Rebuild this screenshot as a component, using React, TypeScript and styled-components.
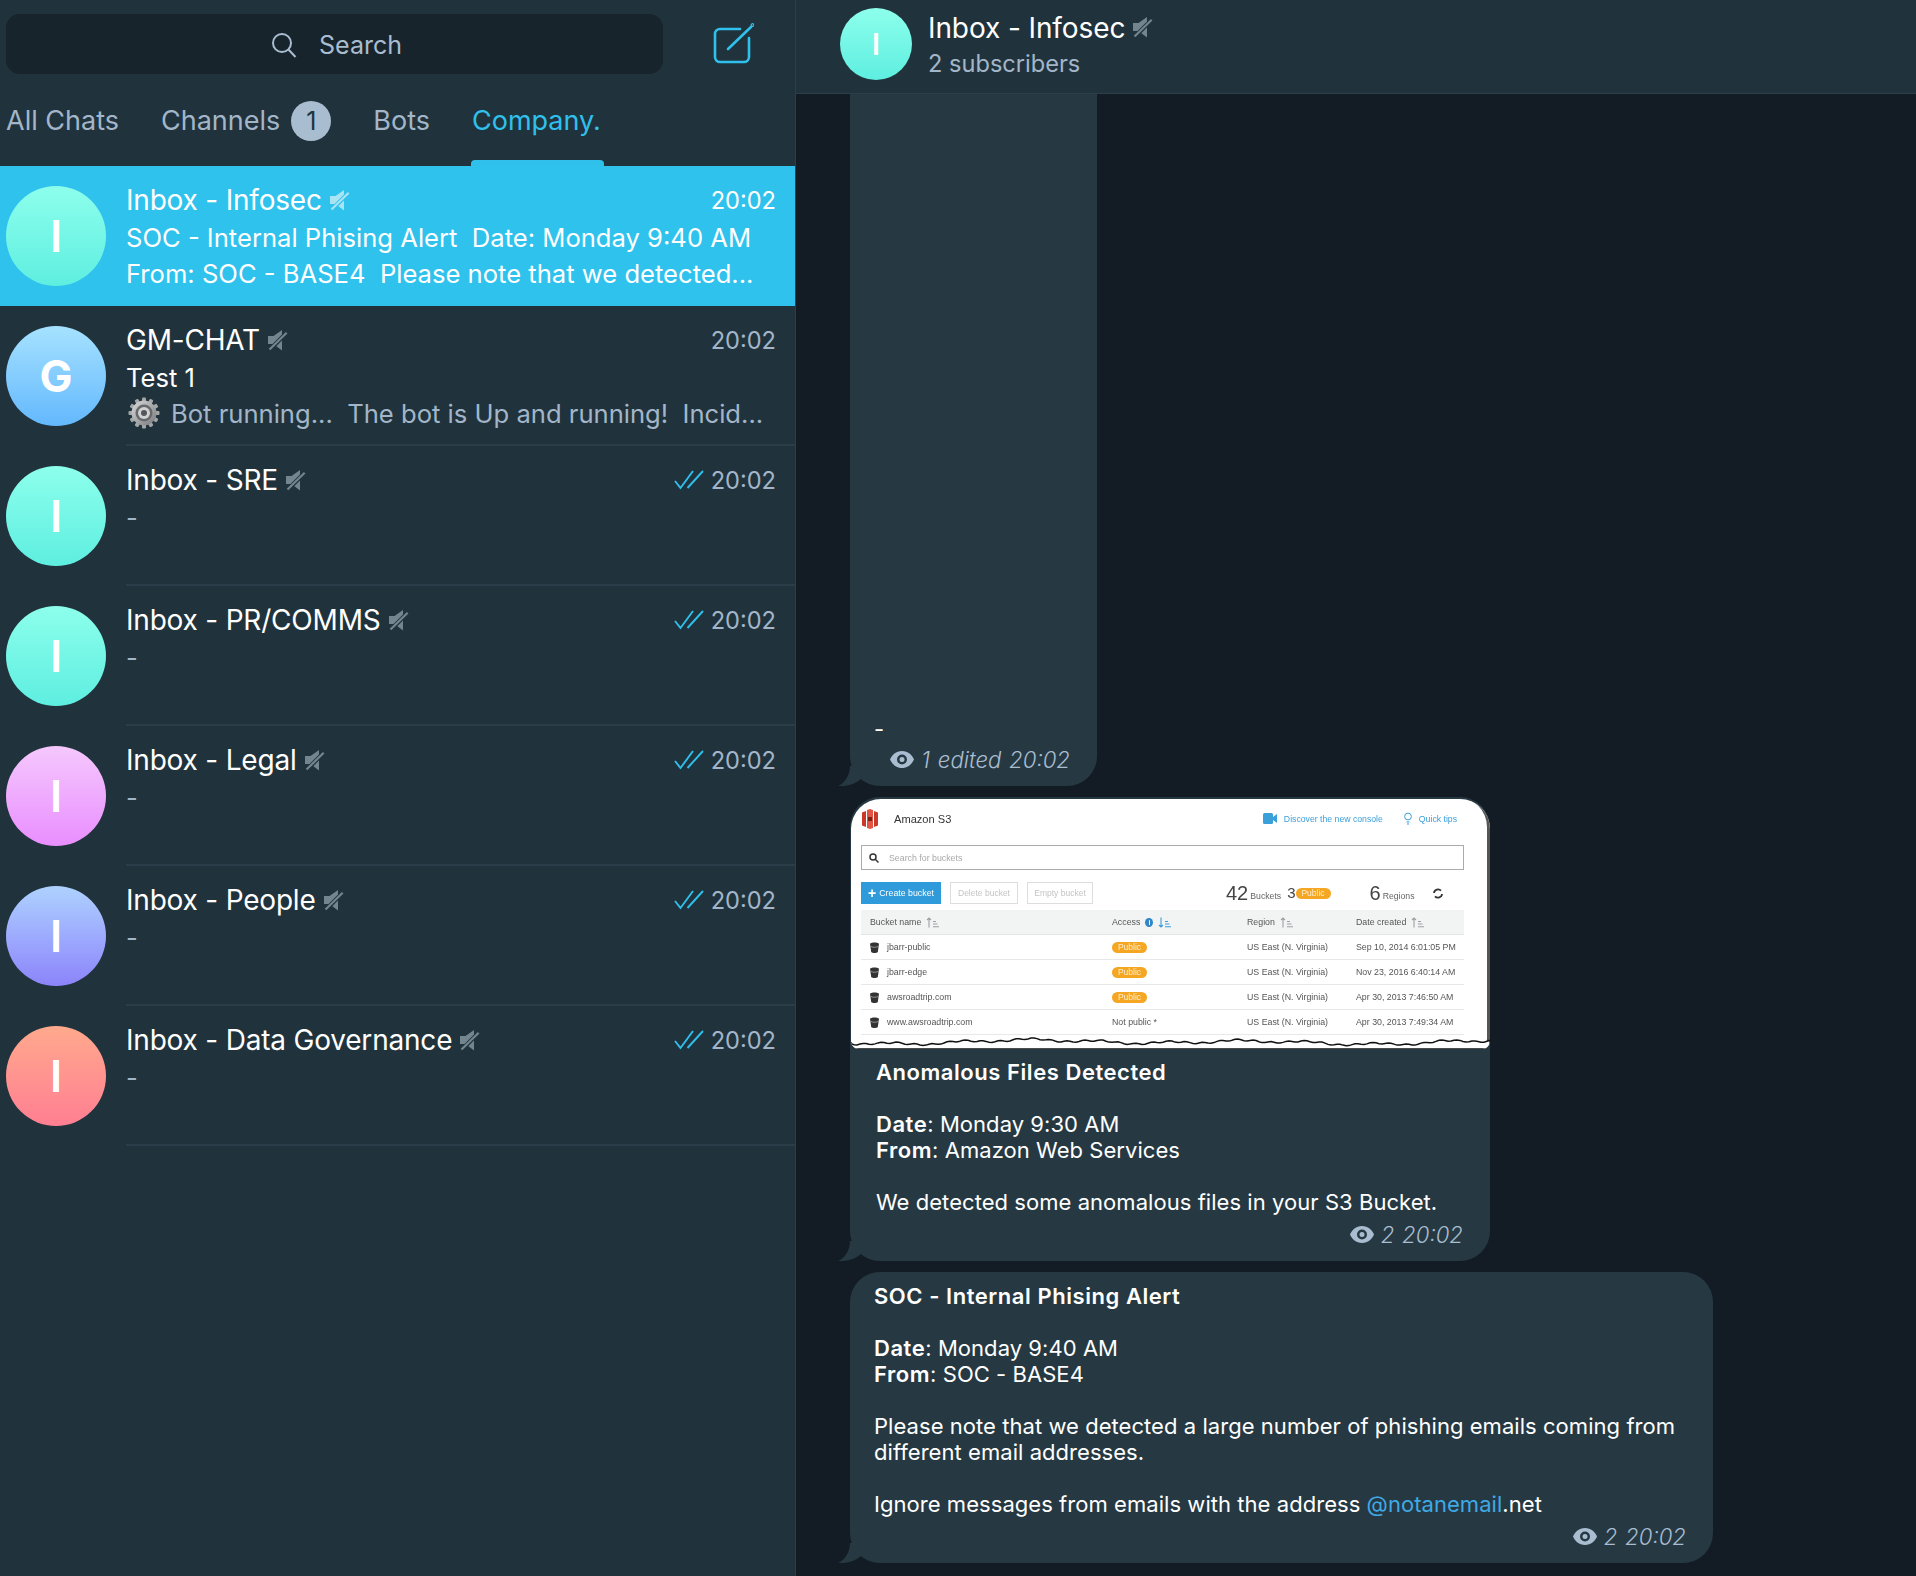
import styled, { createGlobalStyle } from 'styled-components'

const GlobalStyle = createGlobalStyle`
  html, body {
    margin: 0;
    padding: 0;
    background: #131c24;
  }
  * {
    box-sizing: border-box;
  }
`

type Chat = {
  name: string
  initial: string
  from: string
  to: string
  lines: string[]
  read?: boolean
  selected?: boolean
  gear?: boolean
}

const chats: Chat[] = [
  {
    name: 'Inbox - Infosec',
    initial: 'I',
    from: '#8dffec',
    to: '#5eeee0',
    selected: true,
    lines: ['SOC - Internal Phising Alert  Date: Monday 9:40 AM', 'From: SOC - BASE4  Please note that we detected...'],
  },
  {
    name: 'GM-CHAT',
    initial: 'G',
    from: '#a6e2ff',
    to: '#63b8fd',
    gear: true,
    lines: ['Test 1', 'Bot running...  The bot is Up and running!  Incid...'],
  },
  { name: 'Inbox - SRE', initial: 'I', from: '#8dffec', to: '#5eeee0', read: true, lines: ['-'] },
  { name: 'Inbox - PR/COMMS', initial: 'I', from: '#8dffec', to: '#5eeee0', read: true, lines: ['-'] },
  { name: 'Inbox - Legal', initial: 'I', from: '#f5c8fd', to: '#e98eff', read: true, lines: ['-'] },
  { name: 'Inbox - People', initial: 'I', from: '#aed2ff', to: '#8c84fb', read: true, lines: ['-'] },
  { name: 'Inbox - Data Governance', initial: 'I', from: '#ffa98d', to: '#ff7f92', read: true, lines: ['-'] },
]

const buckets = [
  { name: 'jbarr-public', isPublic: true, date: 'Sep 10, 2014 6:01:05 PM' },
  { name: 'jbarr-edge', isPublic: true, date: 'Nov 23, 2016 6:40:14 AM' },
  { name: 'awsroadtrip.com', isPublic: true, date: 'Apr 30, 2013 7:46:50 AM' },
  { name: 'www.awsroadtrip.com', isPublic: false, date: 'Apr 30, 2013 7:49:34 AM' },
]

// the ragged line along the bottom of the pasted screenshot
function tearPath() {
  let d = 'M0 14L0 7'
  for (let x = 0; x <= 639; x += 3) {
    const y =
      7 +
      1.5 * Math.sin(x / 37) +
      1.2 * Math.sin(x / 11 + 1) +
      0.8 * Math.sin(x / 2.7) +
      0.9 * Math.sin(x / 83 + 2)
    d += `L${x} ${y.toFixed(1)}`
  }
  return d + 'L639 14Z'
}

function MuteIcon({ color = '#73858f' }: { color?: string }) {
  return (
    <svg width="20" height="21" viewBox="0 0 20 21">
      <mask id="mute-cut">
        <rect width="20" height="21" fill="#fff" />
        <path d="M1 20.500 19 2.500" stroke="#000" strokeWidth="4.200" />
      </mask>
      <path d="M0 6h5.500L14 0v20.500L5.500 14H0z" fill={color} mask="url(#mute-cut)" />
      <path d="M1.500 19.500 18.700 2.800" stroke={color} strokeWidth="2.200" fill="none" />
    </svg>
  )
}

function Ticks() {
  return (
    <svg width="30" height="20" viewBox="0 0 30 20" fill="none" stroke="#2fc0ec" strokeWidth="1.900">
      <path d="M1 11l5.500 7L19 1" />
      <path d="M13.500 18L29 1" />
    </svg>
  )
}

function Eye() {
  return (
    <svg width="24" height="17" viewBox="0 0 24 17">
      <path
        fillRule="evenodd"
        fill="#a9bdd1"
        d="M12 0c6 0 10 4 12 8.500-2 4.500-6 8.500-12 8.500S2 13 0 8.500C2 4 6 0 12 0zm0 3.500a5 5 0 1 0 0 10 5 5 0 0 0 0-10zm0 2.500a2.500 2.500 0 1 1 0 5 2.500 2.500 0 0 1 0-5z"
      />
    </svg>
  )
}

function Gear() {
  const teeth = Array.from({ length: 12 }, (_, i) => i * 30)
  return (
    <GearMark width="32" height="32" viewBox="0 0 32 32">
      <defs>
        <linearGradient id="gear-body" x1="0" y1="0" x2="1" y2="1">
          <stop offset="0" stopColor="#d8dadb" />
          <stop offset="1" stopColor="#77797b" />
        </linearGradient>
      </defs>
      {teeth.map((deg) => (
        <rect key={deg} x="14" y="0.500" width="4" height="6" rx="1" fill="#a4a6a8" transform={`rotate(${deg} 16 16)`} />
      ))}
      <circle cx="16" cy="16" r="12.500" fill="url(#gear-body)" />
      <circle cx="16" cy="16" r="8.500" fill="#67696c" />
      <circle cx="16" cy="16" r="6" fill="#cfd1d2" />
      <circle cx="16" cy="16" r="3" fill="#54565a" />
    </GearMark>
  )
}

function Tail() {
  return (
    <TailMark width="30" height="20" viewBox="0 0 30 20">
      <path d="M12 0C12 9 7 17 0 20c10 .5 18-2 24-8l-1-12z" fill="#263943" />
    </TailMark>
  )
}

function SortIcon({ active }: { active?: boolean }) {
  const color = active ? '#3a9bd8' : '#9aa0a4'
  return (
    <svg width="13" height="11" viewBox="0 0 13 11" fill="none" stroke={color} strokeWidth="1.100">
      <path d={active ? 'M3 .5V10M1 8l2 2 2-2' : 'M3 10.500V1M1 3l2-2 2 2'} />
      <path d="M7 4.500h3M7 7h4.500M7 9.800h6" />
    </svg>
  )
}

function BucketIcon() {
  return (
    <svg width="9" height="11" viewBox="0 0 9 11">
      <path d="M0 1.500C2 0 7 0 9 1.500L7.800 10c-1.500 1.300-5.100 1.300-6.600 0z" fill="#333" />
      <path d="M1 4.500c2 1 5 1 7 0" stroke="#bbb" strokeWidth=".7" fill="none" />
    </svg>
  )
}

function AwsScreenshot() {
  return (
    <Screenshot>
      <ShotTop>
        <ShotBrand>
          <svg width="18" height="20" viewBox="0 0 18 20">
            <path d="M1 3.500 5 2v16l-4-1.500zM17 3.500 13 2v16l4-1.500z" fill="#c9392a" />
            <path d="M6 1l3-1 3 1v18l-3 1-3-1z" fill="#e25444" />
            <path d="M7 8h4v4H7z" fill="#7a1f14" />
          </svg>
          Amazon S3
        </ShotBrand>
        <ShotLinks>
          <ShotLink>
            <svg width="14" height="11" viewBox="0 0 14 11">
              <rect width="10" height="11" rx="1.500" fill="#3b9fd9" />
              <path d="M10 4l4-3v9l-4-3z" fill="#3b9fd9" />
            </svg>
            Discover the new console
          </ShotLink>
          <ShotLink>
            <svg width="8" height="13" viewBox="0 0 8 13" fill="none" stroke="#3b9fd9">
              <circle cx="4" cy="4.500" r="3.400" />
              <path d="M2.500 10h3M3 12h2" />
            </svg>
            Quick tips
          </ShotLink>
        </ShotLinks>
      </ShotTop>
      <ShotSearch>
        <svg width="10" height="10" viewBox="0 0 10 10" fill="none" stroke="#333" strokeWidth="1.500">
          <circle cx="4" cy="4" r="3" />
          <path d="M6.300 6.300 9.500 9.500" />
        </svg>
        Search for buckets
      </ShotSearch>
      <ShotActions>
        <PrimaryButton>
          <span>+</span> Create bucket
        </PrimaryButton>
        <GhostButton $width={68}>Delete bucket</GhostButton>
        <GhostButton $width={66}>Empty bucket</GhostButton>
        <ShotStats>
          <Stat $size={20}>42</Stat>
          <StatLabel>Buckets</StatLabel>
          <Stat $size={15} $gap={6}>3</Stat>
          <PublicPill>Public</PublicPill>
          <Stat $size={20} $gap={39}>6</Stat>
          <StatLabel>Regions</StatLabel>
          <Refresh>
            <svg width="10" height="11" viewBox="0 0 10 11" fill="none" stroke="#333" strokeWidth="1.800">
              <path d="M1 5a4 4 0 0 1 7-2.300M9 6a4 4 0 0 1-7 2.300" />
            </svg>
          </Refresh>
        </ShotStats>
      </ShotActions>
      <ShotHead>
        <ShotCell>
          Bucket name <SortIcon />
        </ShotCell>
        <ShotCell>
          Access <InfoDot>i</InfoDot> <SortIcon active />
        </ShotCell>
        <ShotCell>
          Region <SortIcon />
        </ShotCell>
        <ShotCell>
          Date created <SortIcon />
        </ShotCell>
      </ShotHead>
      {buckets.map((bucket) => (
        <ShotRow key={bucket.name}>
          <ShotCell>
            <BucketIcon />
            <BucketName>{bucket.name}</BucketName>
          </ShotCell>
          <ShotCell>{bucket.isPublic ? <PublicPill>Public</PublicPill> : 'Not public *'}</ShotCell>
          <ShotCell>US East (N. Virginia)</ShotCell>
          <ShotCell>{bucket.date}</ShotCell>
        </ShotRow>
      ))}
      <TornEdge width="639" height="14" viewBox="0 0 639 14">
        <path d={tearPath()} fill="#fff" stroke="#111" strokeWidth="1.500" />
      </TornEdge>
    </Screenshot>
  )
}

export default function App() {
  return (
    <Page>
      <GlobalStyle />
      <Sidebar>
        <TopBar>
          <SearchBox>
            <svg width="26" height="26" viewBox="0 0 26 26" fill="none" stroke="#a9bdd1" strokeWidth="2">
              <circle cx="11" cy="11" r="9" />
              <path d="M17.500 17.500 24.500 25" />
            </svg>
            Search
          </SearchBox>
          <ComposeButton>
            <svg width="42" height="44" viewBox="0 0 42 44" fill="none" stroke="#2fc0ec" strokeWidth="2.600" strokeLinecap="round">
              <path d="M28 8H8a5 5 0 0 0-5 5v23a5 5 0 0 0 5 5h24a5 5 0 0 0 5-5V17" />
              <path d="M16 28 39 6" />
              <circle cx="40.500" cy="4" r=".6" />
            </svg>
          </ComposeButton>
        </TopBar>
        <Tabs>
          <Tab>All Chats</Tab>
          <Tab>
            Channels
            <Badge>1</Badge>
          </Tab>
          <Tab>Bots</Tab>
          <Tab $active>Company.</Tab>
        </Tabs>
        {chats.map((chat) => (
          <ChatRow key={chat.name} $selected={chat.selected}>
            <Avatar $size={100} $from={chat.from} $to={chat.to} $slim={chat.initial === 'I'}>
              {chat.initial}
            </Avatar>
            <ChatBody $selected={chat.selected}>
              <ChatTitleRow $selected={chat.selected}>
                <ChatName>{chat.name}</ChatName>
                <MuteIcon color={chat.selected ? '#a9e4f5' : '#73858f'} />
                <ChatTime $selected={chat.selected}>
                  {chat.read && <Ticks />}
                  20:02
                </ChatTime>
              </ChatTitleRow>
              {chat.lines.map((line, index) => {
                const firstOfTwo = chat.gear && index === 0
                return (
                  <Preview key={line} $bright={chat.selected || firstOfTwo}>
                    {chat.gear && index === 1 && <Gear />}
                    {line}
                  </Preview>
                )
              })}
            </ChatBody>
          </ChatRow>
        ))}
      </Sidebar>
      <ChatPane>
        <ChatHeader>
          <Avatar $size={72} $from="#8dffec" $to="#5eeee0" $slim>
            I
          </Avatar>
          <HeaderText>
            <HeaderName>
              Inbox - Infosec <MuteIcon />
            </HeaderName>
            <HeaderSub>2 subscribers</HeaderSub>
          </HeaderText>
        </ChatHeader>
        <Messages>
          <Bubble $width={247} $grow>
            <Tail />
            <MessageText $pull={2}>-</MessageText>
            <Meta>
              <Eye /> 1 edited 20:02
            </Meta>
          </Bubble>
          <Bubble $width={640}>
            <Tail />
            <AwsScreenshot />
            <MessageText $inset={26}>
              <strong>Anomalous Files Detected</strong>
              {'\n\n'}
              <strong>Date</strong>: Monday 9:30 AM{'\n'}
              <strong>From</strong>: Amazon Web Services{'\n\n'}
              We detected some anomalous files in your S3 Bucket.
            </MessageText>
            <Meta>
              <Eye /> 2 20:02
            </Meta>
          </Bubble>
          <Bubble $width={863}>
            <Tail />
            <MessageText $top={11}>
              <strong>SOC - Internal Phising Alert</strong>
              {'\n\n'}
              <strong>Date</strong>: Monday 9:40 AM{'\n'}
              <strong>From</strong>: SOC - BASE4{'\n\n'}
              Please note that we detected a large number of phishing emails coming from{'\n'}
              different email addresses.{'\n\n'}
              Ignore messages from emails with the address <Mention>@notanemail</Mention>.net
            </MessageText>
            <Meta>
              <Eye /> 2 20:02
            </Meta>
          </Bubble>
        </Messages>
      </ChatPane>
    </Page>
  )
}

const Page = styled.div`
  width: 1916px;
  height: 1576px;
  display: grid;
  grid-template-columns: 796px 1fr;
  overflow: hidden;
  background: #131c24;
  font-family: Inter, 'Liberation Sans', sans-serif;
  color: #fff;
`

const Sidebar = styled.aside`
  background: #20333c;
  border-right: 1px solid #2b3f4a;
  display: flex;
  flex-direction: column;
`

const TopBar = styled.div`
  display: flex;
  align-items: flex-start;
  height: 88px;
  padding: 14px 0 0 6px;
`

const SearchBox = styled.div`
  width: 657px;
  height: 60px;
  border-radius: 14px;
  background: #18242c;
  display: flex;
  align-items: center;
  justify-content: center;
  gap: 22px;
  color: #a9bdd1;
  font-size: 25px;
  padding: 1px 0 0 4px;
`

const ComposeButton = styled.div`
  display: flex;
  margin: 7px 0 0 49px;
`

const Tabs = styled.nav`
  height: 78px;
  display: flex;
  padding: 0 0 0 6px;
  gap: 42px;
`

const Tab = styled.div<{ $active?: boolean }>`
  position: relative;
  height: 78px;
  padding-bottom: 13px;
  display: flex;
  align-items: center;
  gap: 11px;
  font-size: 27px;
  color: ${(props) => (props.$active ? '#2fc0ec' : '#a3b6c9')};

  ${(props) =>
    props.$active &&
    `
    &::after {
      content: '';
      position: absolute;
      left: -1px;
      right: -3px;
      bottom: 0;
      height: 6px;
      border-radius: 4px 4px 0 0;
      background: #2fc0ec;
    }
  `}
`

const Badge = styled.span`
  width: 40px;
  height: 40px;
  border-radius: 50%;
  background: #a9bdd1;
  color: #20333c;
  font-size: 25px;
  display: flex;
  align-items: center;
  justify-content: center;
`

const ChatRow = styled.div<{ $selected?: boolean }>`
  height: 140px;
  display: flex;
  padding-left: 6px;
  background: ${(props) => (props.$selected ? '#2fc2ed' : 'transparent')};
`

const Avatar = styled.div<{ $size: number; $from: string; $to: string; $slim?: boolean }>`
  flex: none;
  width: ${(props) => props.$size}px;
  height: ${(props) => props.$size}px;
  margin-top: ${(props) => (props.$size === 100 ? 20 : 0)}px;
  border-radius: 50%;
  background: linear-gradient(180deg, ${(props) => props.$from}, ${(props) => props.$to});
  display: flex;
  align-items: center;
  justify-content: center;
  color: #fff;
  font-weight: ${(props) => (props.$slim ? 600 : 700)};
  font-size: ${(props) => (props.$size === 100 ? 44 : 30)}px;
`

const ChatBody = styled.div<{ $selected?: boolean }>`
  flex: 1;
  min-width: 0;
  margin-left: 20px;
  padding: 16px 19px 0 0;
  border-bottom: 2px solid ${(props) => (props.$selected ? 'transparent' : '#2a3d48')};
`

const ChatTitleRow = styled.div<{ $selected?: boolean }>`
  height: 36px;
  margin-bottom: ${(props) => (props.$selected ? 0 : 1)}px;
  display: flex;
  align-items: center;
  gap: 8px;
`

const ChatName = styled.div`
  font-size: 28px;
  color: #fff;
  letter-spacing: -0.2px;
`

const ChatTime = styled.div<{ $selected?: boolean }>`
  margin-left: auto;
  display: flex;
  align-items: center;
  gap: 7px;
  font-size: 23.600px;
  color: ${(props) => (props.$selected ? '#fff' : '#a3b6c9')};
`

const Preview = styled.div<{ $bright?: boolean }>`
  height: 34px;
  margin-top: 2px;
  display: flex;
  align-items: center;
  gap: 11px;
  white-space: pre;
  font-size: 25.600px;
  color: ${(props) => (props.$bright ? '#fff' : '#a3b6c9')};
`

const GearMark = styled.svg`
  margin-left: 2px;
`

const ChatPane = styled.main`
  min-width: 0;
  height: 1576px;
  display: flex;
  flex-direction: column;
`

const ChatHeader = styled.header`
  flex: none;
  height: 94px;
  background: #20333c;
  border-bottom: 1px solid #2b3f4a;
  display: flex;
  align-items: center;
  gap: 16px;
  padding: 0 0 5px 44px;
`

const HeaderText = styled.div`
  display: flex;
  flex-direction: column;
  gap: 4px;
`

const HeaderName = styled.div`
  display: flex;
  align-items: center;
  gap: 8px;
  font-size: 28px;
  letter-spacing: -0.1px;
`

const HeaderSub = styled.div`
  font-size: 23.600px;
  color: #a3b6c9;
`

const Messages = styled.section`
  flex: 1;
  min-height: 0;
  display: flex;
  flex-direction: column;
  justify-content: flex-end;
  align-items: flex-start;
  gap: 11px;
  padding: 0 0 13px 54px;
  overflow: hidden;
`

const Bubble = styled.article<{ $width: number; $grow?: boolean }>`
  position: relative;
  flex: ${(props) => (props.$grow ? '1 1 0' : 'none')};
  min-height: 0;
  width: ${(props) => props.$width}px;
  display: flex;
  flex-direction: column;
  justify-content: flex-end;
  background: #263943;
  border-radius: ${(props) => (props.$grow ? '0 0 30px 30px' : '30px')};
  padding-bottom: 14px;
`

const TailMark = styled.svg`
  position: absolute;
  left: -12px;
  bottom: 0;
`

const MessageText = styled.div<{ $inset?: number; $top?: number; $pull?: number }>`
  padding: ${(props) => props.$top ?? 10}px ${(props) => props.$inset ?? 24}px 0;
  margin-bottom: ${(props) => -(props.$pull ?? 0)}px;
  white-space: pre-wrap;
  font-size: 22px;
  line-height: 26px;
  letter-spacing: 0.05px;
  color: #fff;

  strong {
    font-weight: 600;
    letter-spacing: 0.55px;
  }
`

const Mention = styled.span`
  color: #3fa9e6;
`

const Meta = styled.div`
  align-self: flex-end;
  display: flex;
  align-items: center;
  gap: 7px;
  height: 26px;
  margin: 6px 27px 0 0;
  font-size: 22.200px;
  word-spacing: 1.500px;
  font-style: italic;
  font-weight: 300;
  color: #a9bdd1;
`

const Screenshot = styled.div`
  position: relative;
  flex: none;
  height: 250px;
  margin: 2px 0 0 1px;
  padding: 0 26px 0 10px;
  background: #fff;
  border-radius: 30px 30px 8px 8px;
  box-shadow: inset -3px -2px 0 #555;
  overflow: hidden;
  font-family: 'Liberation Sans', sans-serif;
  color: #555;
  font-size: 9px;
  filter: blur(0.35px);
`

const ShotTop = styled.div`
  height: 46px;
  padding-bottom: 7px;
  display: flex;
  align-items: center;
  justify-content: space-between;
`

const ShotBrand = styled.div`
  display: flex;
  align-items: center;
  gap: 15px;
  font-size: 11.100px;
  color: #333;
`

const ShotLinks = styled.div`
  display: flex;
  gap: 21px;
  padding-right: 7px;
`

const ShotLink = styled.div`
  display: flex;
  align-items: center;
  gap: 7px;
  color: #3b9fd9;
  font-size: 8.700px;
`

const ShotSearch = styled.div`
  height: 25px;
  border: 1.500px solid #aaa;
  display: flex;
  align-items: center;
  gap: 10px;
  padding-left: 7px;
  color: #a8a8a8;
  font-size: 8.800px;
`

const ShotActions = styled.div`
  height: 22px;
  margin: 12px 0 6px;
  display: flex;
  align-items: stretch;
  gap: 9px;
`

const PrimaryButton = styled.div`
  flex: none;
  width: 80px;
  background: #2f9bdb;
  color: #fff;
  display: flex;
  align-items: center;
  justify-content: center;
  gap: 3px;
  white-space: nowrap;
  font-size: 8.800px;

  span {
    font-size: 14px;
    font-weight: 700;
  }
`

const GhostButton = styled.div<{ $width: number }>`
  flex: none;
  width: ${(props) => props.$width}px;
  border: 1px solid #ddd;
  color: #c4c4c4;
  display: flex;
  align-items: center;
  justify-content: center;
  white-space: nowrap;
  font-size: 8.500px;
`

const ShotStats = styled.div`
  margin-left: 124px;
  display: flex;
  align-items: flex-end;
  white-space: nowrap;
  color: #444;
`

const Stat = styled.span<{ $size: number; $gap?: number }>`
  font-size: ${(props) => props.$size}px;
  line-height: 22px;
  margin-left: ${(props) => props.$gap ?? 0}px;
`

const StatLabel = styled.span`
  font-size: 8.700px;
  line-height: 16px;
  margin-left: 2px;
  color: #666;
`

const Refresh = styled.span`
  margin: 0 0 5px 18px;
  display: flex;
`

const PublicPill = styled.span`
  display: inline-flex;
  align-items: center;
  justify-content: center;
  width: 35px;
  height: 11px;
  border-radius: 6px;
  background: #f5a623;
  color: #fdeccd;
  font-size: 8.500px;
  align-self: center;
`

const shotColumns = 'grid-template-columns: 242px 135px 109px 1fr;'

const ShotHead = styled.div`
  display: grid;
  ${shotColumns}
  height: 25px;
  background: #f2f4f4;
  border-bottom: 1px solid #e4e6e6;
`

const ShotRow = styled.div`
  display: grid;
  ${shotColumns}
  height: 25px;
  border-bottom: 1px solid #e8e8e8;
`

const ShotCell = styled.div`
  display: flex;
  align-items: center;
  gap: 5px;
  padding-left: 9px;
  white-space: nowrap;
  font-size: 8.800px;
  color: #555;
`

const BucketName = styled.span`
  margin-left: 3px;
`

const InfoDot = styled.span`
  width: 8px;
  height: 9px;
  border-radius: 50%;
  background: #2f86c9;
  color: #fff;
  font-size: 7px;
  font-weight: 700;
  display: inline-flex;
  align-items: center;
  justify-content: center;
`

const TornEdge = styled.svg`
  position: absolute;
  left: 0;
  bottom: 0;
`
